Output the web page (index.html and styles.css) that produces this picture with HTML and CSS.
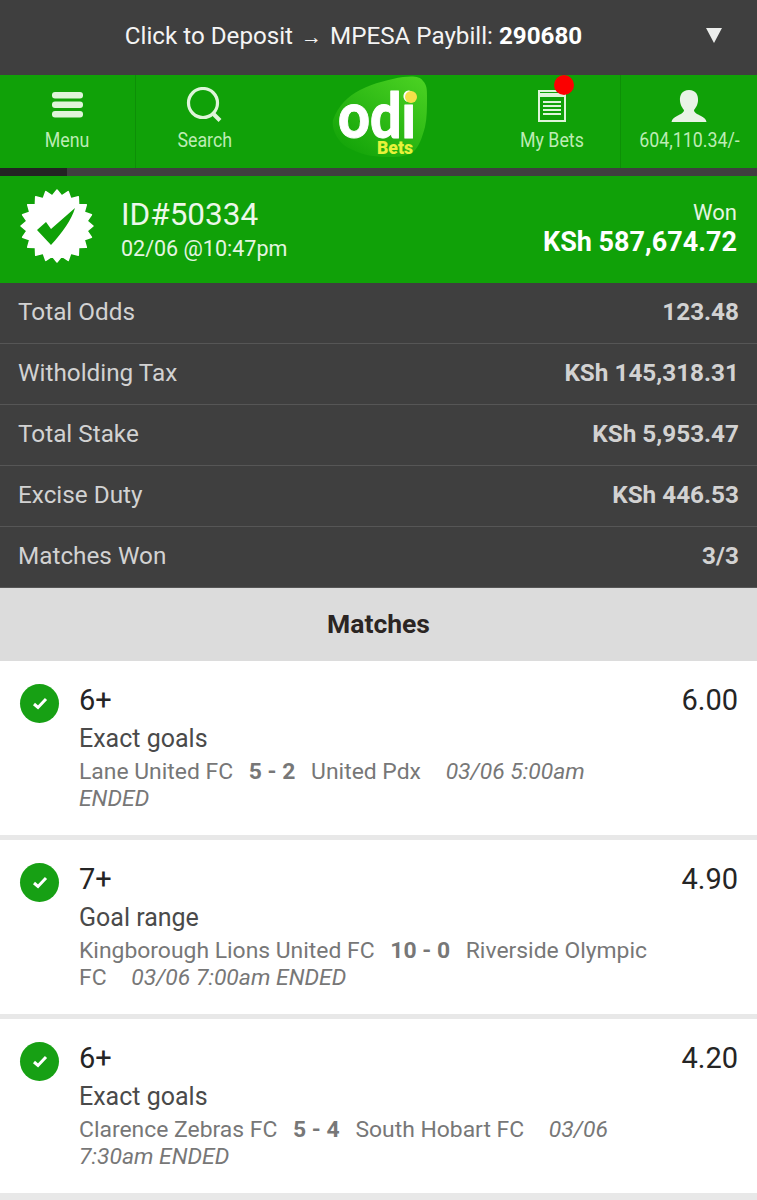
FILE: index.html
```html
<!DOCTYPE html>
<html lang="en">
<head>
    <meta charset="UTF-8">
    <meta name="viewport" content="width=device-width, initial-scale=1.0">
    <title>OdiBets - Bet details</title>
    <link rel="stylesheet" href="styles.css">
</head>
<body>
    <div class="deposit-bar">
        <span>Click to Deposit <span class="arrow">→</span> MPESA Paybill: <b>290680</b></span>
        <svg class="deposit-caret" width="16" height="15" viewBox="0 0 16 15"><path d="M0 0H16L8 15Z" fill="#eceeec"/></svg>
    </div>

    <nav class="top-nav">
        <a class="nav-item nav-menu">
            <svg width="32" height="27" viewBox="0 0 32 27" fill="#dff5da"><rect y="0" width="31" height="6.5" rx="3"/><rect y="9.5" width="31" height="6.5" rx="3"/><rect y="19" width="31" height="6.5" rx="3"/></svg>
            <span>Menu</span>
        </a>
        <a class="nav-item nav-search">
            <svg width="38" height="36" viewBox="0 0 38 36" fill="none" stroke="#dff5da"><circle cx="17" cy="16" r="14.5" stroke-width="3.2"/><path d="M27 26.5L34 33.5" stroke-width="4"/></svg>
            <span>Search</span>
        </a>
        <div class="nav-logo">
            <svg width="96" height="82" viewBox="0 0 96 82">
                <defs>
                    <linearGradient id="logoBg" x1="0.9" y1="0" x2="0.2" y2="0.9">
                        <stop offset="0" stop-color="#4ad122"/>
                        <stop offset="1" stop-color="#16a60a"/>
                    </linearGradient>
                </defs>
                <path d="M1 44C6 30 16 20 28 14C42 7 58 3 71 1C80 0 88 0 91 5C95 9 95 14 95 20C95 32 95 42 93 51C90 62 87 71 81 76C73 81 64 81 55 81C43 81 31 79 21 74C13 71 8 66 5 61C2 56 0 50 1 44Z" fill="url(#logoBg)"/>
                <text x="6" y="62" class="logo-word" textLength="78" lengthAdjust="spacingAndGlyphs">odi</text>
                <circle cx="79" cy="21" r="6" fill="#f3e04a"/>
                <text x="45" y="78" class="logo-bets" textLength="36" lengthAdjust="spacingAndGlyphs">Bets</text>
            </svg>
        </div>
        <a class="nav-item nav-bets">
            <span class="nav-badge"></span>
            <svg width="29" height="32" viewBox="0 0 29 32" fill="none" stroke="#dff5da"><rect x="1" y="1" width="26" height="30" stroke-width="2"/><path d="M1 5H27" stroke-width="4"/><path d="M5 12H23M5 16H23M5 20H23M5 24H23" stroke-width="1.8"/></svg>
            <span>My Bets</span>
        </a>
        <a class="nav-item nav-account">
            <svg width="36" height="34" viewBox="0 0 36 34" fill="#e8f3e6"><path d="M18 1C25 1 27.500 6 27 12C26.500 17 24 19.500 23 21C23 23.500 26 25 30 27C33 28.500 35 30 35.500 33H.5C1 30 3 28.500 6 27C10 25 13 23.500 13 21C12 19.500 9.500 17 9 12C8.500 6 11 1 18 1Z"/></svg>
            <span>604,110.34/-</span>
        </a>
    </nav>

    <div class="progress-strip"><div class="progress-fill"></div></div>

    <section class="bet-head">
        <svg class="bet-badge" width="74" height="74" viewBox="0 0 74 74">
            <polygon fill="#fff" stroke="#fff" stroke-width="1.5" stroke-linejoin="round" points="73,37 67.100,41.800 71.400,48.200 64.200,50.800 66.300,58.300 58.600,58.600 58.300,66.300 50.800,64.200 48.200,71.400 41.800,67.100 37,73 32.200,67.100 25.800,71.400 23.200,64.200 15.700,66.300 15.400,58.600 7.700,58.300 9.800,50.800 2.600,48.200 6.900,41.800 1,37 6.900,32.200 2.600,25.800 9.800,23.200 7.700,15.700 15.400,15.400 15.700,7.700 23.200,9.800 25.800,2.600 32.200,6.900 37,1 41.800,6.900 48.200,2.600 50.800,9.800 58.300,7.700 58.600,15.400 66.300,15.700 64.200,23.200 71.400,25.800 67.100,32.200"/>
            <path d="M17 41L26 33L31 40L55 19C52 30 42 44 31 56Z" fill="#10a108"/>
        </svg>
        <div class="bet-id">
            <div class="bet-id-num">ID#50334</div>
            <div class="bet-id-date">02/06 @10:47pm</div>
        </div>
        <div class="bet-result">
            <div class="bet-result-label">Won</div>
            <div class="bet-result-amount">KSh 587,674.72</div>
        </div>
    </section>

    <section class="summary">
        <div class="summary-row"><span>Total Odds</span><b>123.48</b></div>
        <div class="summary-row"><span>Witholding Tax</span><b>KSh 145,318.31</b></div>
        <div class="summary-row"><span>Total Stake</span><b>KSh 5,953.47</b></div>
        <div class="summary-row"><span>Excise Duty</span><b>KSh 446.53</b></div>
        <div class="summary-row"><span>Matches Won</span><b>3/3</b></div>
    </section>

    <h2 class="matches-title">Matches</h2>

    <section class="match">
        <span class="match-check"><svg width="16" height="13" viewBox="0 0 16 13" fill="none" stroke="#fff" stroke-width="3"><path d="M2 7L6 10.500L14 2"/></svg></span>
        <div class="match-body">
            <div class="match-top"><span class="match-pick">6+</span><span class="match-odds">6.00</span></div>
            <div class="match-market">Exact goals</div>
            <div class="match-info"><span>Lane United FC</span> <b>5 - 2</b> <span>United Pdx</span> <i>03/06 5:00am</i> <i class="no-gap">ENDED</i></div>
        </div>
    </section>

    <section class="match">
        <span class="match-check"><svg width="16" height="13" viewBox="0 0 16 13" fill="none" stroke="#fff" stroke-width="3"><path d="M2 7L6 10.500L14 2"/></svg></span>
        <div class="match-body">
            <div class="match-top"><span class="match-pick">7+</span><span class="match-odds">4.90</span></div>
            <div class="match-market">Goal range</div>
            <div class="match-info"><span>Kingborough Lions United FC</span> <b>10 - 0</b> <span>Riverside Olympic</span> <span>FC</span> <i>03/06 7:00am ENDED</i></div>
        </div>
    </section>

    <section class="match">
        <span class="match-check"><svg width="16" height="13" viewBox="0 0 16 13" fill="none" stroke="#fff" stroke-width="3"><path d="M2 7L6 10.500L14 2"/></svg></span>
        <div class="match-body">
            <div class="match-top"><span class="match-pick">6+</span><span class="match-odds">4.20</span></div>
            <div class="match-market">Exact goals</div>
            <div class="match-info"><span>Clarence Zebras FC</span> <b>5 - 4</b> <span>South Hobart FC</span> <i>03/06</i> <i class="no-gap">7:30am ENDED</i></div>
        </div>
    </section>
</body>
</html>
```

FILE: styles.css
```css
/* Base */
body {
    margin: 0;
    height: 1200px;
    overflow: hidden;
    background-color: #e8e8e8;
    font-family: Roboto, 'Liberation Sans', sans-serif;
}

/* Deposit bar */
.deposit-bar {
    position: relative;
    box-sizing: border-box;
    height: 75px;
    padding: 0 50px 3px 0;
    background-color: #3f3f3f;
    color: #f4f4f4;
    font-size: 24.2px;
    display: flex;
    justify-content: center;
    align-items: center;
}

.deposit-bar b {
    color: #fff;
}

.arrow {
    font-size: 21px;
    margin: 0 2px;
}

.deposit-caret {
    position: absolute;
    right: 35px;
    top: 28px;
}

/* Top navigation */
.top-nav {
    height: 93px;
    background-color: #10a108;
    display: flex;
    color: #bdecb4;
    font-size: 20px;
}

.nav-item {
    position: relative;
    box-sizing: border-box;
    display: flex;
    flex-direction: column;
    align-items: center;
    width: 136px;
    height: 93px;
}

.nav-item span:last-child {
    transform: scaleX(0.89);
    white-space: nowrap;
}

.nav-menu {
    padding-top: 17px;
    gap: 9px;
    border-right: 1px solid #0d8f07;
}

.nav-search {
    width: 137px;
    padding-top: 12px;
    gap: 5px;
}

.nav-logo {
    flex: 1;
    padding: 1px 0 0 59px;
}

.nav-bets {
    padding-top: 15px;
    gap: 6px;
}

.nav-account {
    width: 137px;
    padding-top: 14px;
    gap: 5px;
    border-left: 1px solid #0d8f07;
}

.nav-badge {
    position: absolute;
    top: 0;
    left: 70px;
    width: 20px;
    height: 20px;
    border-radius: 50%;
    background-color: #fb0000;
}

.logo-word {
    font-family: Lato, sans-serif;
    font-weight: 900;
    font-size: 62px;
    fill: #fff;
    stroke: #fff;
    stroke-width: 1;
    stroke-linejoin: round;
}

.logo-bets {
    font-family: Roboto, sans-serif;
    font-weight: 900;
    font-size: 19px;
    fill: #e6f23a;
}

.progress-strip {
    height: 8px;
    background-color: #3f3f3f;
}

.progress-fill {
    width: 67px;
    height: 8px;
    background-color: #232323;
}

/* Bet header */
.bet-head {
    height: 107px;
    background-color: #10a108;
    color: #fff;
    display: flex;
    align-items: center;
    padding: 0 20px 3px;
    box-sizing: border-box;
}

.bet-badge {
    margin: 0 27px 4px 0;
}

.bet-id {
    flex: 1;
    padding-top: 4px;
}

.bet-id-num {
    font-size: 31.5px;
    line-height: 36px;
    color: #ecf8ea;
}

.bet-id-date {
    margin-top: 2px;
    font-size: 21.5px;
    line-height: 28px;
    color: #e4f5e1;
}

.bet-result {
    text-align: right;
    padding-top: 1px;
}

.bet-result-label {
    font-size: 22px;
    line-height: 28px;
    margin-bottom: -1px;
    color: #e4f5e1;
}

.bet-result-amount {
    font-size: 27px;
    font-weight: bold;
    line-height: 32px;
}

/* Summary */
.summary {
    background-color: #3f3f3f;
    color: #d2d2d2;
}

.summary-row {
    height: 61px;
    box-sizing: border-box;
    border-bottom: 1px solid #565656;
    padding: 0 18px 3px;
    display: flex;
    justify-content: space-between;
    align-items: center;
    font-size: 24.3px;
}

/* Matches */
.matches-title {
    margin: 0;
    height: 73px;
    line-height: 71px;
    text-align: center;
    font-size: 26.500px;
    font-weight: bold;
    color: #2b2523;
    background-color: #dcdcdc;
}

.match {
    height: 174px;
    box-sizing: border-box;
    margin-bottom: 5px;
    background-color: #fff;
    display: flex;
    padding: 23px 19px 0 20px;
}

.match-check {
    width: 39px;
    height: 39px;
    flex: none;
    border-radius: 50%;
    background-color: #17a014;
    display: flex;
    justify-content: center;
    align-items: center;
}

.match-body {
    flex: 1;
    margin-left: 20px;
}

.match-top {
    display: flex;
    justify-content: space-between;
    font-size: 29px;
    line-height: 32px;
    color: #252525;
}

.match-market {
    font-size: 25px;
    line-height: 30px;
    color: #4a4a4a;
    margin-top: 8px;
}

.match-info {
    font-size: 22.9px;
    line-height: 27px;
    color: #777;
    margin-top: 4px;
    padding-right: 81px;
}

.match-info b {
    margin: 0 10px;
}

.match-info i {
    margin-left: 19px;
}

.match-info .no-gap {
    margin-left: 0;
}
```
